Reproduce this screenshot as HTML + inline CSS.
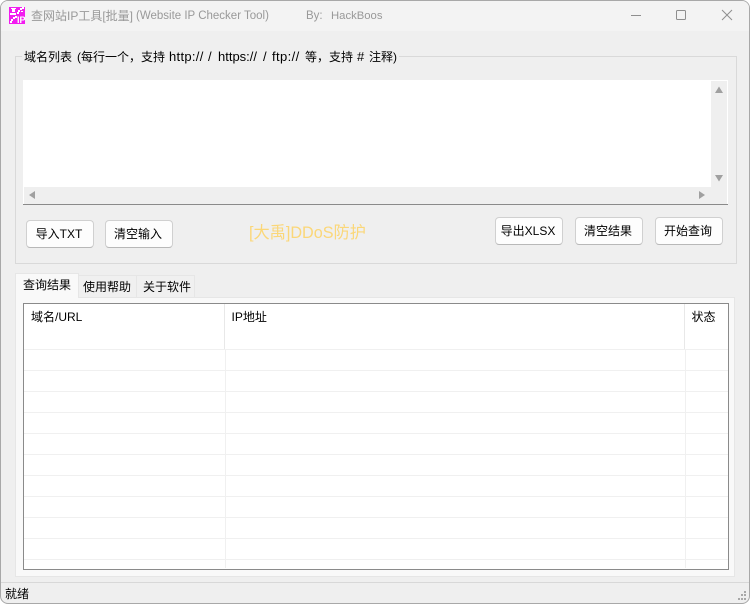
<!DOCTYPE html>
<html><head><meta charset="utf-8"><style>
*{box-sizing:border-box;margin:0;padding:0}
html,body{width:751px;height:605px;overflow:hidden;background:#fff}
body{position:relative;font-family:"Liberation Sans","Noto Sans CJK SC",sans-serif;font-size:12px;color:#000}
.a{position:absolute}
.t{position:absolute;white-space:nowrap;line-height:16px}
.l{font-size:13px}
.btn{position:absolute;width:68px;height:28px;padding-right:2px;background:#fdfdfd;border:1px solid #d0d0d0;border-bottom-color:#b8b8b8;border-radius:4px;text-align:center;line-height:26px;white-space:nowrap}
.h{position:absolute;left:24px;width:704px;height:1px;background:#f0f0f0}
</style></head><body>
<div class="a" id="win" style="left:0;top:0;width:750px;height:604px;background:#efefef;border:1px solid #a8a8a8;border-radius:8px;overflow:hidden">
<div class="a" style="left:0;top:0;width:748px;height:30px;background:#f3f3f3"></div>
</div>
<svg class="a" style="left:9px;top:7px" width="16" height="17" viewBox="0 0 16 17" shape-rendering="crispEdges">
<rect width="16" height="17" fill="#f21cf0"/>
<g fill="#fff"><rect x="2" y="1" width="5" height="1"/><rect x="3" y="2" width="3" height="3"/><rect x="1" y="6" width="6" height="2"/><rect x="11" y="1" width="2" height="2"/><rect x="13" y="0" width="2" height="2"/><rect x="9" y="3" width="2" height="2"/><rect x="8" y="5" width="2" height="2"/><rect x="12" y="4" width="2" height="1"/>
<rect x="4" y="10" width="2" height="2"/><rect x="6" y="9" width="2" height="2"/><rect x="2" y="12" width="2" height="2"/><rect x="1" y="14" width="2" height="2"/></g>
<text x="8" y="16" font-family="Liberation Sans" font-size="9" font-weight="700" fill="#fff">IP</text>
</svg>
<div class="t" style="left:31px;top:8px;color:#999">查网站IP工具[批量]</div>
<div class="t" style="left:136px;top:8px;color:#999;font-size:11.5px">(Website IP Checker Tool)</div>
<div class="t" style="left:306px;top:8px;color:#999;font-size:11.5px">By:</div>
<div class="t" style="left:331px;top:8px;color:#999;font-size:11.3px">HackBoos</div>
<svg class="a" style="left:625px;top:5px" width="125" height="20" fill="none" stroke="#8e8e8e" stroke-width="1">
<path d="M6 10.5H16"/><rect x="51.5" y="5.5" width="9" height="9" rx="1"/><path d="M97 5L107 15M107 5L97 15"/>
</svg>

<div class="a" style="left:15px;top:56px;width:722px;height:208px;border:1px solid #d9d9d9"></div>
<div class="a" style="left:22px;top:50px;width:377px;height:14px;background:#efefef"></div>
<div class="t" style="left:24px;top:49px">域名列表</div>
<div class="t" style="left:77px;top:49px">(每行一个，支持</div>
<div class="t l" style="left:169px;top:49px;letter-spacing:.3px">http://</div>
<div class="t l" style="left:208px;top:49px">/</div>
<div class="t l" style="left:218px;top:49px">https://</div>
<div class="t l" style="left:263px;top:49px">/</div>
<div class="t l" style="left:272px;top:49px;letter-spacing:.4px">ftp://</div>
<div class="t" style="left:305px;top:49px">等，支持</div>
<div class="t l" style="left:357px;top:49px">#</div>
<div class="t" style="left:369px;top:49px">注释)</div>

<div class="a" style="left:23px;top:80px;width:705px;height:125px;background:#fff;border-bottom:1px solid #8a8a8a"></div>
<div class="a" style="left:711px;top:81px;width:16px;height:123px;background:#efefef"></div>
<div class="a" style="left:24px;top:187px;width:703px;height:17px;background:#efefef"></div>
<svg class="a" style="left:23px;top:80px" width="705" height="125" fill="#a0a0a0">
<path d="M692 13L696 6.5L700 13Z"/><path d="M692 95L700 95L696 101.5Z"/><path d="M6 115L12 111V119Z"/><path d="M676 111L682 115L676 119Z"/>
</svg>

<div class="btn" style="left:26px;top:220px">导入TXT</div>
<div class="btn" style="left:105px;top:220px">清空输入</div>
<div class="t" style="left:249px;top:224px;font-size:16.2px;line-height:18px;color:#fbd778">[大禹]DDoS防护</div>
<div class="btn" style="left:495px;top:217px">导出XLSX</div>
<div class="btn" style="left:575px;top:217px">清空结果</div>
<div class="btn" style="left:655px;top:217px">开始查询</div>

<div class="a" style="left:15px;top:297px;width:720px;height:280px;background:#f9f9f9;border:1px solid #e6e6e6"></div>
<div class="a" style="left:78px;top:275px;width:59px;height:23px;background:#f0f0f0;border:1px solid #e6e6e6;border-left:0"></div>
<div class="a" style="left:137px;top:275px;width:58px;height:23px;background:#f0f0f0;border:1px solid #e6e6e6;border-left:0"></div>
<div class="a" style="left:15px;top:273px;width:64px;height:25px;background:#f9f9f9;border:1px solid #e6e6e6;border-bottom:0"></div>
<div class="t" style="left:23px;top:277px">查询结果</div>
<div class="t" style="left:83px;top:279px">使用帮助</div>
<div class="t" style="left:143px;top:279px">关于软件</div>

<div class="a" style="left:23px;top:303px;width:706px;height:267px;background:#fff;border:1px solid #8a8a8a"></div>
<div class="h" style="top:349px"></div><div class="h" style="top:370px"></div><div class="h" style="top:391px"></div><div class="h" style="top:412px"></div><div class="h" style="top:433px"></div><div class="h" style="top:454px"></div><div class="h" style="top:475px"></div><div class="h" style="top:496px"></div><div class="h" style="top:517px"></div><div class="h" style="top:538px"></div><div class="h" style="top:559px"></div>
<div class="a" style="left:224px;top:304px;width:1px;height:45px;background:#e8e8e8"></div>
<div class="a" style="left:225px;top:349px;width:1px;height:219px;background:#f0f0f0"></div>
<div class="a" style="left:684px;top:304px;width:1px;height:45px;background:#e8e8e8"></div>
<div class="a" style="left:685px;top:349px;width:1px;height:219px;background:#f0f0f0"></div>
<div class="t" style="left:31px;top:309px">域名/URL</div>
<div class="t" style="left:231.5px;top:309px">IP地址</div>
<div class="t" style="left:691.5px;top:309px">状态</div>

<div class="a" style="left:1px;top:582px;width:748px;height:1px;background:#d8d8d8"></div>
<div class="t" style="left:5px;top:586px">就绪</div>
<svg class="a" style="left:736px;top:590px" width="12" height="12" fill="#a8a8a8" shape-rendering="crispEdges">
<rect x="8" y="1" width="2" height="2"/><rect x="5" y="4" width="2" height="2"/><rect x="8" y="4" width="2" height="2"/><rect x="2" y="8" width="2" height="2"/><rect x="5" y="8" width="2" height="2"/><rect x="8" y="8" width="2" height="2"/>
</svg>
</body></html>
